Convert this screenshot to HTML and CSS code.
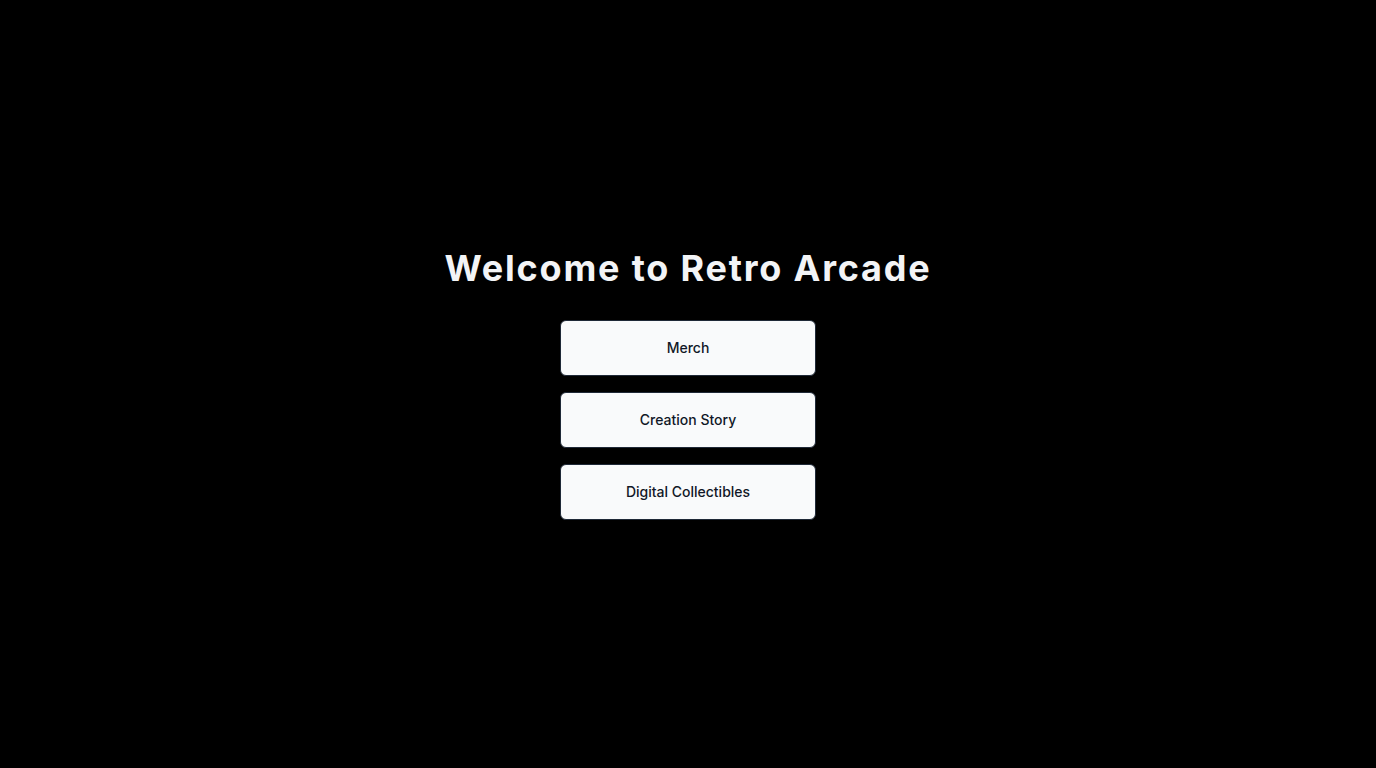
FILE: index.html
```html
<!DOCTYPE html>
<html lang="en">
<head>
<meta charset="utf-8">
<meta name="viewport" content="width=device-width, initial-scale=1">
<title>Retro Arcade</title>
<link rel="stylesheet" href="styles.css">
</head>
<body>
<main class="welcome">
  <h1 class="title">Welcome to Retro Arcade</h1>
  <nav class="menu" aria-label="Main">
    <button class="menu-button" type="button">Merch</button>
    <button class="menu-button" type="button">Creation Story</button>
    <button class="menu-button" type="button">Digital Collectibles</button>
  </nav>
</main>
</body>
</html>
```
FILE: styles.css
```css
* {
  box-sizing: border-box;
}

body {
  margin: 0;
  background: #000;
  color: #f3f4f6;
  font-family: Inter, sans-serif;
}

.welcome {
  min-height: 100vh;
  display: flex;
  flex-direction: column;
  align-items: center;
  justify-content: center;
  gap: 32px;
}

.title {
  margin: 0;
  font-size: 36px;
  line-height: 40px;
  font-weight: 700;
  letter-spacing: 0.05em;
  text-align: center;
}

.menu {
  display: flex;
  flex-direction: column;
  gap: 16px;
  width: 256px;
  max-width: 100%;
}

.menu-button {
  height: 56px;
  padding: 8px 16px;
  border: 1px solid #1f2937;
  border-radius: 6px;
  background: #f9fafb;
  color: #111827;
  font-family: inherit;
  font-size: 14px;
  line-height: 20px;
  font-weight: 500;
  cursor: pointer;
}
```
